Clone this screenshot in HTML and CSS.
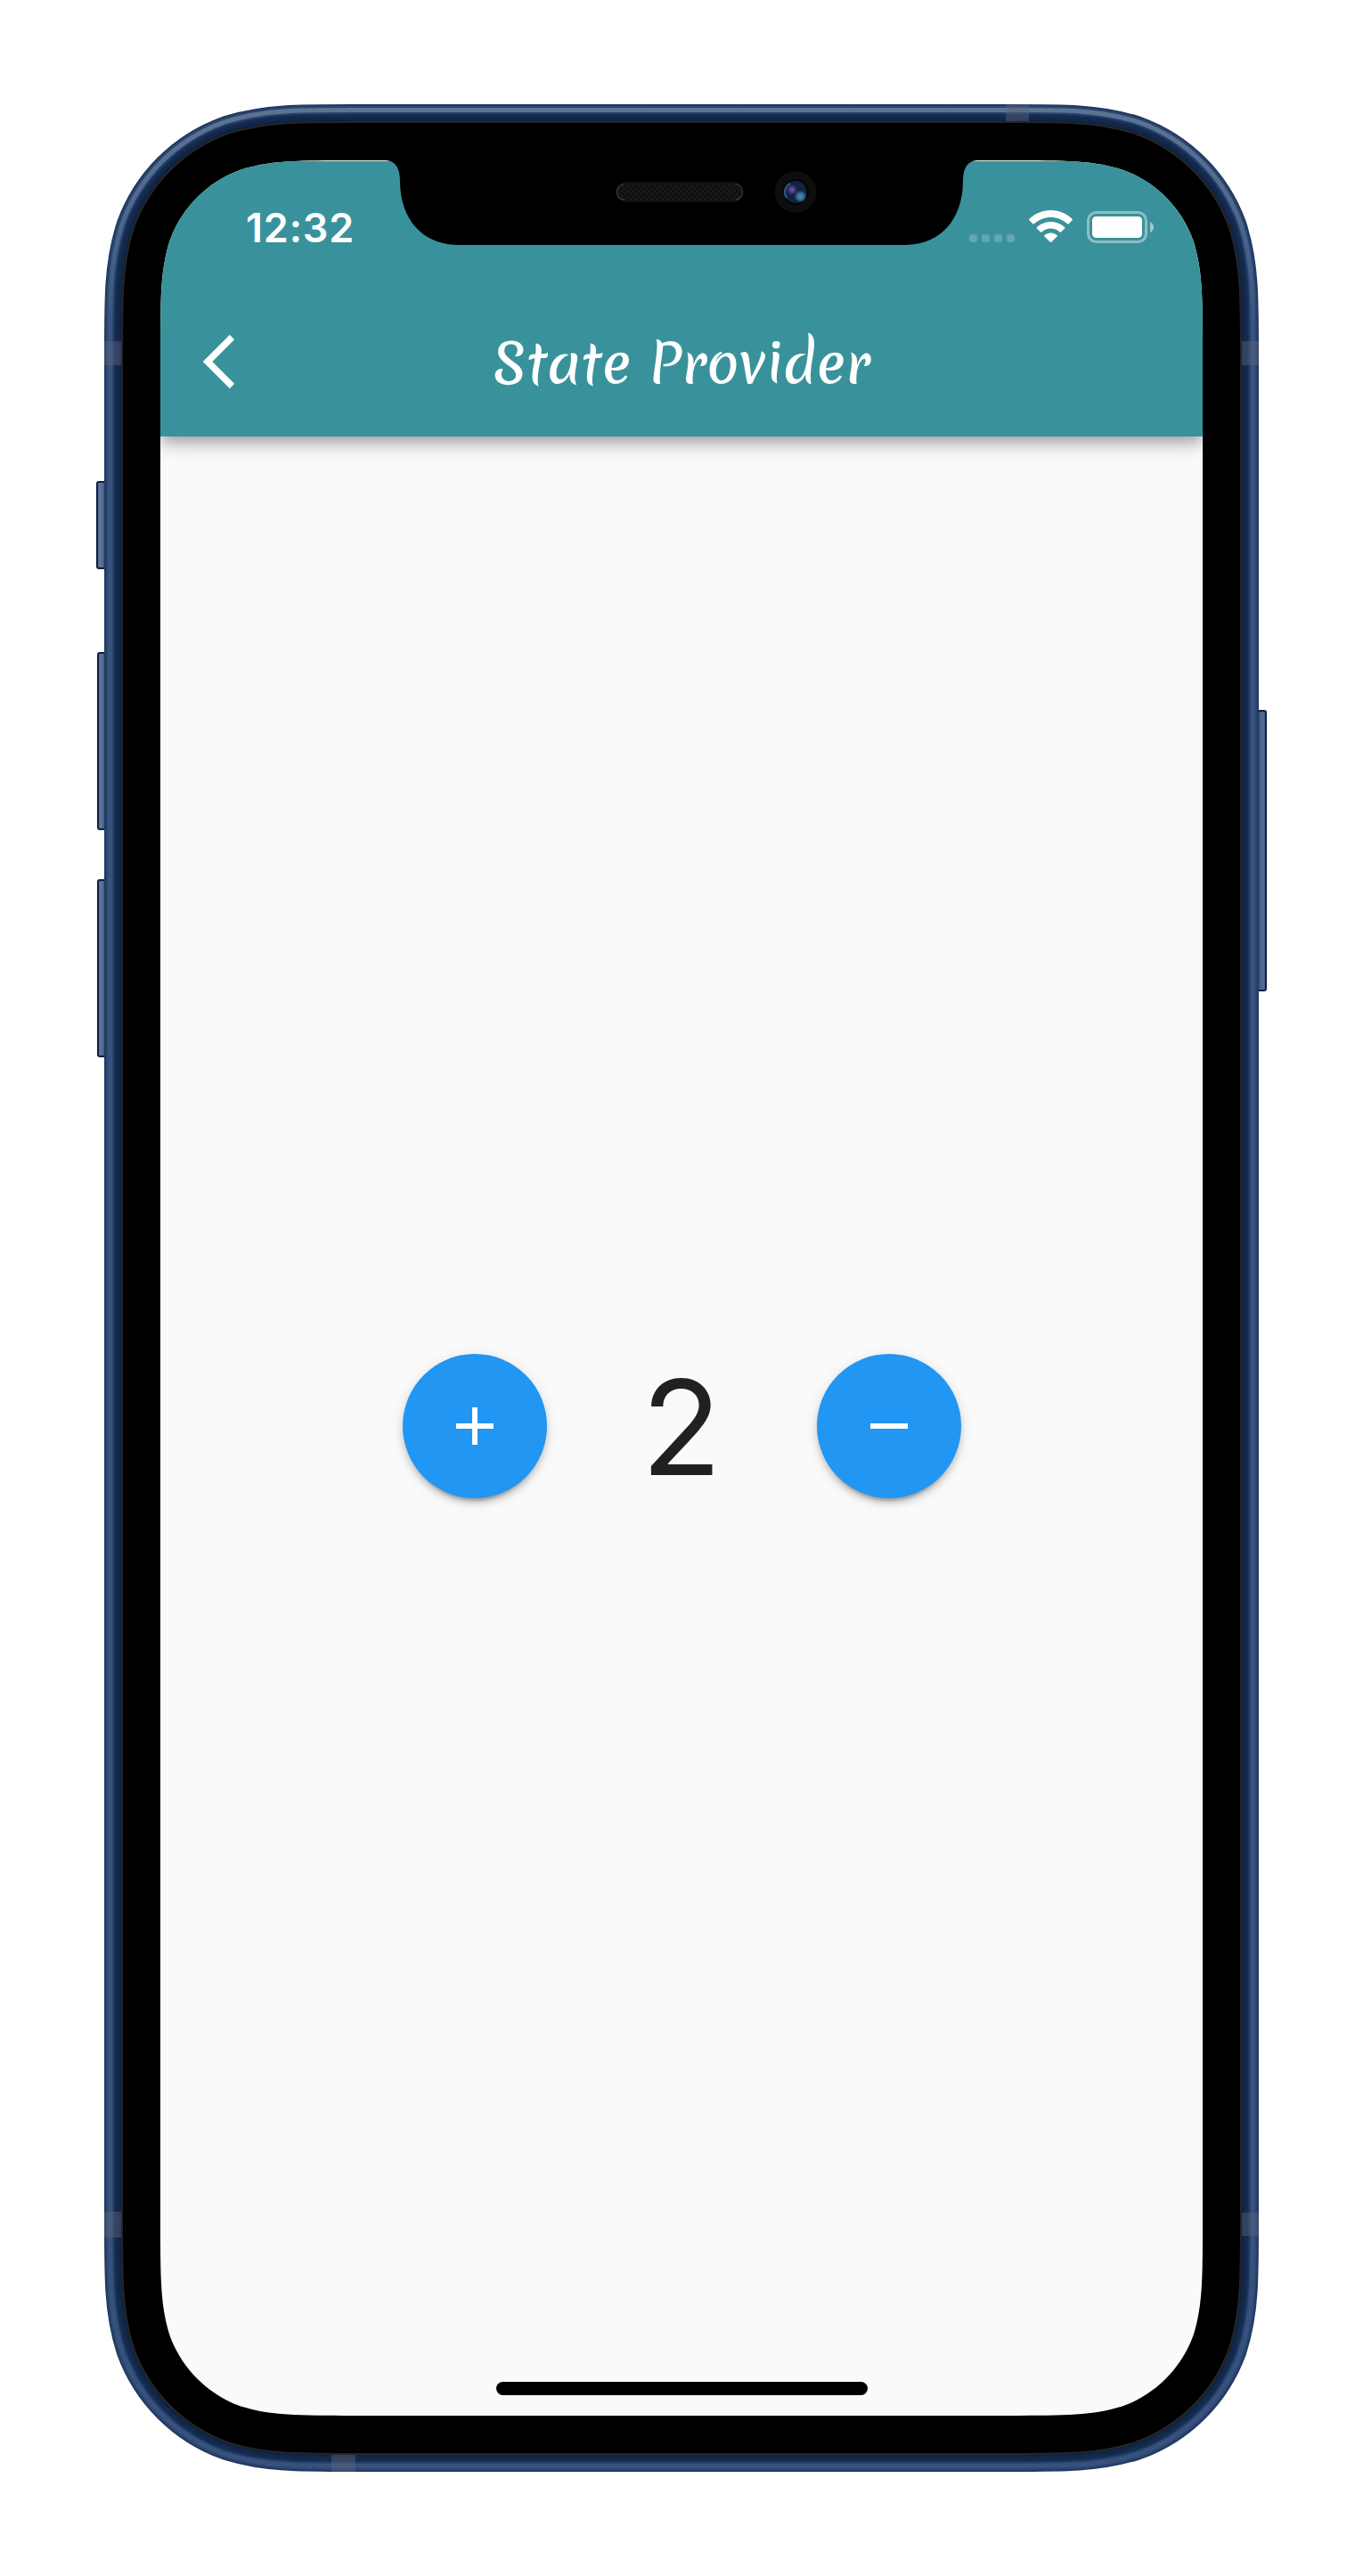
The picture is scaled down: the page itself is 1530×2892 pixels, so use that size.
FILE: index.html
```html
<!DOCTYPE html>
<html lang="en">
<head>
<meta charset="utf-8">
<title>State Provider</title>
<link rel="stylesheet" href="styles.css">
</head>
<body>
<main class="phone">
  <svg class="frame" viewBox="-72 -63 1314 2658" aria-hidden="true">
    <defs>
      <path id="outline" d="M217 0H953C1015.43 0 1046.69 0 1080.33 10.64C1117.06 24.01 1145.99 52.94 1159.36 89.67C1170 123.31 1170 154.57 1170 217V2315C1170 2377.43 1170 2408.69 1159.36 2442.33C1145.99 2479.06 1117.06 2507.99 1080.33 2521.36C1046.69 2532 1015.43 2532 953 2532H217C154.57 2532 123.31 2532 89.67 2521.36C52.94 2507.99 24.01 2479.06 10.64 2442.33C0 2408.69 0 2377.43 0 2315V217C0 154.57 0 123.31 10.64 89.67C24.01 52.94 52.94 24.01 89.67 10.64C123.31 0 154.57 0 217 0Z"/>
      <linearGradient id="shine" gradientUnits="userSpaceOnUse" x1="0" y1="-63" x2="0" y2="200">
        <stop offset="0" stop-color="#5d7494"/><stop offset=".4" stop-color="#506a90"/><stop offset="1" stop-color="#36527c"/>
      </linearGradient>
      <linearGradient id="keyLeft"><stop offset="0" stop-color="#1c2f55"/><stop offset=".2" stop-color="#5c749b"/><stop offset=".5" stop-color="#5c749b"/><stop offset="1" stop-color="#3c5377"/></linearGradient>
      <linearGradient id="keyRight"><stop offset="0" stop-color="#384b6d"/><stop offset=".5" stop-color="#526b92"/><stop offset=".8" stop-color="#526b92"/><stop offset="1" stop-color="#132347"/></linearGradient>
    </defs>
    <g stroke="#111d42" stroke-width="2">
      <path fill="url(#keyLeft)" d="M-62 361H-69Q-71 361 -71 363V456Q-71 458 -69 458H-62"/>
      <path fill="url(#keyLeft)" d="M-62 553H-68Q-70 553 -70 555V749Q-70 751 -68 751H-62"/>
      <path fill="url(#keyLeft)" d="M-62 808H-68Q-70 808 -70 810V1004Q-70 1006 -68 1006H-62"/>
      <path fill="url(#keyRight)" d="M1232 618H1239Q1241 618 1241 620V930Q1241 932 1239 932H1232"/>
    </g>
    <g fill="none">
      <use href="#outline" stroke="#233a60" stroke-width="126"/>
      <use href="#outline" stroke="#2c4670" stroke-width="122"/>
      <use href="#outline" stroke="url(#shine)" stroke-width="118"/>
      <use href="#outline" stroke="#2a456f" stroke-width="108"/>
      <use href="#outline" stroke="#1b3459" stroke-width="105"/>
      <use href="#outline" stroke="#142b4f" stroke-width="102"/>
      <use href="#outline" stroke="#10274a" stroke-width="96"/>
      <use href="#outline" stroke="#0d1f3f" stroke-width="90"/>
      <use href="#outline" stroke="#262626" stroke-width="88"/>
      <use href="#outline" stroke="#000" stroke-width="84"/>
    </g>
    <g fill="#5a6479" fill-opacity=".45">
      <rect x="-63" y="203" width="19" height="27"/>
      <rect x="1214" y="203" width="19" height="27"/>
      <rect x="949" y="-63" width="26" height="19"/>
      <rect x="-63" y="2303" width="19" height="29"/>
      <rect x="1214" y="2304" width="19" height="26"/>
      <rect x="192" y="2576" width="27" height="19"/>
    </g>
  </svg>

  <section class="screen">
    <header class="app-bar">
      <div class="status-bar">
        <time class="clock">12:32</time>
        <div class="indicators">
          <span class="signal"><i></i><i></i><i></i><i></i></span>
          <svg class="wifi" viewBox="0 0 49 36" fill="#fff" aria-hidden="true">
            <path d="M24.5 0C34 0 42.500 3.800 48.600 9.800Q49.200 10.600 48.600 11.300L44.700 15.200Q44 15.800 43.200 15.200C38 10.500 31.500 7.900 24.500 7.900S11 10.500 5.800 15.200Q5 15.800 4.300 15.200L.4 11.300Q-.2 10.600 .4 9.800C6.500 3.800 15 0 24.500 0Z"/>
            <path d="M24.500 12.900C30.600 12.900 36 15.200 40.100 19Q40.600 19.700 40.100 20.400L36 24.400Q35.300 24.900 34.600 24.400C31.800 22 28.400 20.600 24.500 20.600S17.200 22 14.400 24.400Q13.700 24.900 13 24.400L8.900 20.400Q8.400 19.700 8.900 19C13 15.200 18.400 12.900 24.500 12.900Z"/>
            <path d="M24.500 25.600C27.200 25.600 29.600 26.500 31.500 28.100Q32.200 28.800 31.500 29.500L25.200 35.700Q24.500 36.300 23.800 35.700L17.500 29.500Q16.800 28.800 17.500 28.100C19.400 26.500 21.800 25.600 24.500 25.600Z"/>
          </svg>
          <svg class="battery" viewBox="0 0 75 36" aria-hidden="true">
            <rect x="1.500" y="1.500" width="65" height="33" rx="9" fill="none" stroke="#fff" stroke-opacity=".42" stroke-width="3"/>
            <rect x="6" y="6" width="56" height="24" rx="4.500" fill="#fff"/>
            <path d="M71 12Q75 14 75 18T71 24Z" fill="#fff" fill-opacity=".5"/>
          </svg>
        </div>
      </div>
      <div class="toolbar">
        <button class="back" aria-label="Back">
          <svg viewBox="0 0 36 60"><path d="M32.500 2.500L5 30L32.500 57.500" fill="none" stroke="#fff" stroke-width="7.500"/></svg>
        </button>
        <h1 class="title">State Provider</h1>
      </div>
    </header>
    <div class="counter">
      <button class="fab" aria-label="Increase"><svg viewBox="0 0 42 42"><path d="M0 21H42M21 0V42"/></svg></button>
      <output class="value">2</output>
      <button class="fab" aria-label="Decrease"><svg viewBox="0 0 42 42"><path d="M0 21H42"/></svg></button>
    </div>
    <div class="home-indicator"></div>
    <svg class="notch" viewBox="0 0 670 95" aria-hidden="true">
      <defs>
        <pattern id="mesh" width="6" height="6" patternUnits="userSpaceOnUse"><rect width="6" height="6" fill="#0f0f0f"/><path d="M0 0h3v3h-3zM3 3h3v3h-3z" fill="#191919"/></pattern>
        <radialGradient id="violet"><stop offset="0" stop-color="#7656b8"/><stop offset="1" stop-color="#7656b8" stop-opacity="0"/></radialGradient>
        <radialGradient id="cyan"><stop offset="0" stop-color="#4687aa"/><stop offset=".5" stop-color="#38719a"/><stop offset="1" stop-color="#38719a" stop-opacity="0"/></radialGradient>
      </defs>
      <path d="M3 0C14 .5 19 9 19 23C19 65 43 95 85 95H585C627 95 651 65 651 23C651 9 656 .5 667 0Z"/>
      <rect x="262.500" y="25" width="141" height="21" rx="10.500" fill="url(#mesh)" stroke="#111" stroke-width="1.500"/>
      <path d="M271 26.500Q262.500 28 262.500 35.500T271 44.500M395 26.500Q403.500 28 403.500 35.500T395 44.500" fill="none" stroke="#3c3c3c" stroke-width="1.200"/>
      <circle cx="463" cy="35.500" r="23.500" fill="#0d0d0d"/>
      <circle cx="463" cy="35.500" r="14.500" fill="#040404"/>
      <circle cx="463" cy="35.500" r="12.500" fill="#13233f"/>
      <path d="M453 42A11 11 0 0 1 457 26" fill="none" stroke="#28527f" stroke-width="2.500"/>
      <circle cx="459" cy="33" r="6" fill="url(#violet)"/>
      <circle cx="468.500" cy="40.500" r="7" fill="url(#cyan)"/>
    </svg>
  </section>
</main>
</body>
</html>
```
FILE: styles.css
```css
* { box-sizing: border-box; }

body {
  margin: 0;
  background: #fff;
  font-family: Inter, "Liberation Sans", sans-serif;
}

button {
  display: grid;
  place-items: center;
  padding: 0;
  border: 0;
  background: none;
}

.phone {
  display: grid;
  width: 1314px;
  height: 2658px;
  margin: 117px 108px;
}

.frame, .screen { grid-area: 1 / 1; }

.frame { width: 1314px; height: 2658px; }

.screen {
  position: relative;
  display: flex;
  flex-direction: column;
  width: 1170px;
  height: 2532px;
  margin: 63px 72px;
  padding-top: 1px;
  background: linear-gradient(#fff 1px, #fafafa 1px);
  clip-path: path("M217 0H953C1015.43 0 1046.69 0 1080.33 10.64C1117.06 24.01 1145.99 52.94 1159.36 89.67C1170 123.31 1170 154.57 1170 217V2315C1170 2377.43 1170 2408.69 1159.36 2442.33C1145.99 2479.06 1117.06 2507.99 1080.33 2521.36C1046.69 2532 1015.43 2532 953 2532H217C154.57 2532 123.31 2532 89.67 2521.36C52.94 2507.99 24.01 2479.06 10.64 2442.33C0 2408.69 0 2377.43 0 2315V217C0 154.57 0 123.31 10.64 89.67C24.01 52.94 52.94 24.01 89.67 10.64C123.31 0 154.57 0 217 0Z");
}

.app-bar {
  flex: none;
  height: 309px;
  background: #39929b;
  color: #fff;
  box-shadow: 0 6px 12px -3px rgba(0, 0, 0, .2), 0 12px 15px rgba(0, 0, 0, .14), 0 3px 30px rgba(0, 0, 0, .1);
}

.status-bar {
  display: flex;
  justify-content: space-between;
  height: 141px;
  padding: 47px 55px 0 96px;
}

.clock {
  padding-top: 1px;
  font-size: 45px;
  font-weight: 600;
  line-height: 54px;
  letter-spacing: .8px;
}

.indicators {
  display: flex;
  align-items: flex-start;
  padding-top: 8px;
}

.signal {
  display: flex;
  gap: 5px;
  margin: 27px 16px 0 0;
}

.signal i {
  width: 9px;
  height: 9px;
  border-radius: 3px;
  background: rgba(255, 255, 255, .2);
}

.wifi { width: 49px; height: 36px; margin-right: 16px; }
.battery { width: 75px; height: 36px; margin-top: 1px; }

.toolbar {
  display: grid;
  grid-template-columns: 84px 1fr 84px;
  align-items: center;
  height: 168px;
}

.back { justify-self: end; }
.back svg { display: block; width: 36px; height: 60px; }

.title {
  margin: 0;
  padding-top: 3px;
  font-family: Merienda, cursive;
  font-size: 60px;
  font-weight: 500;
  line-height: 84px;
  text-align: center;
  white-space: nowrap;
}

.counter {
  flex: 1;
  display: grid;
  grid-template-columns: 162px 303px 162px;
  place-content: center;
  align-items: center;
}

.fab {
  width: 162px;
  height: 162px;
  border-radius: 50%;
  background: #2196f3;
  box-shadow: 0 9px 3px -6px rgba(0, 0, 0, .2), 0 6px 6px rgba(0, 0, 0, .14), 0 3px 15px rgba(0, 0, 0, .12);
}

.fab svg {
  display: block;
  width: 42px;
  height: 42px;
  stroke: #fff;
  stroke-width: 6;
}

.value {
  padding-top: 4px;
  color: #212121;
  font-size: 148px;
  line-height: 158px;
  text-align: center;
}

/* Floats over the page content at the bottom edge */
.home-indicator {
  position: absolute;
  bottom: 23px;
  left: 377px;
  width: 417px;
  height: 15px;
  border-radius: 8px;
  background: #000;
}

.notch {
  position: absolute;
  top: 0;
  left: 250px;
  width: 670px;
  height: 95px;
}
```
